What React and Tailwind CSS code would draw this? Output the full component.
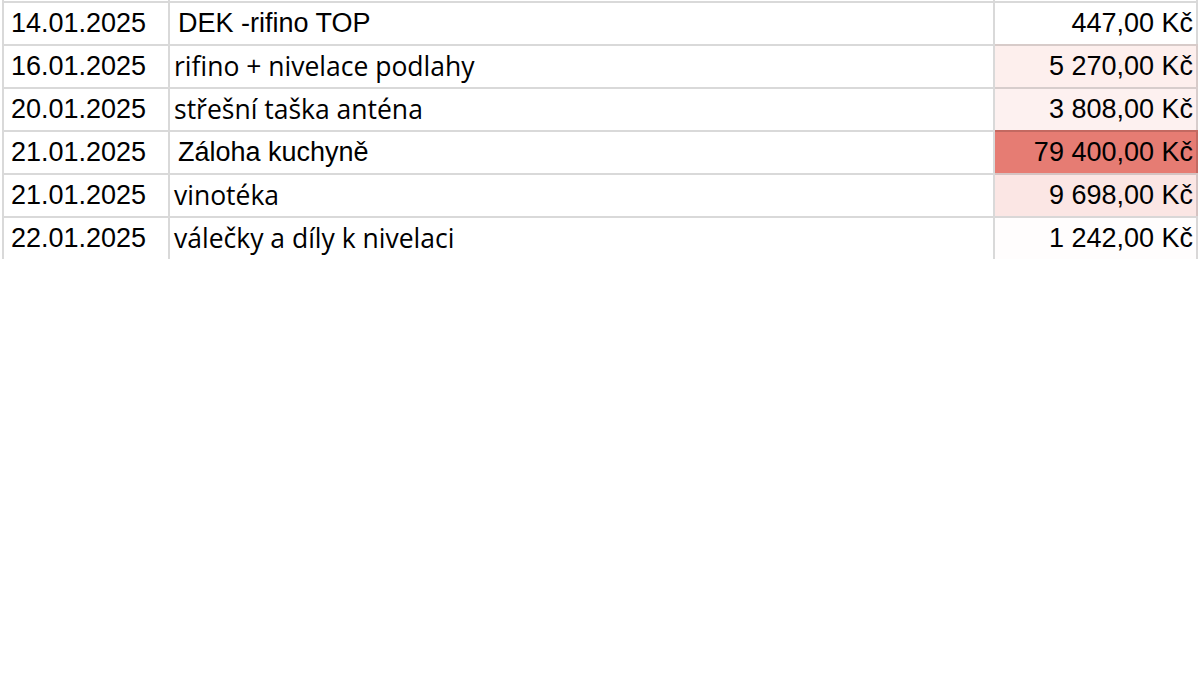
import React from "react";

const rows = [
  { date: "14.01.2025", desc: "DEK -rifino TOP", arial: true, amount: "447,00 Kč", bg: "bg-white" },
  { date: "16.01.2025", desc: "rifino + nivelace podlahy", arial: false, amount: "5 270,00 Kč", bg: "bg-[#fdefed]" },
  { date: "20.01.2025", desc: "střešní taška anténa", arial: false, amount: "3 808,00 Kč", bg: "bg-[#fdf1f0]" },
  { date: "21.01.2025", desc: "Záloha kuchyně", arial: true, amount: "79 400,00 Kč", bg: "bg-[#e67c73]" },
  { date: "21.01.2025", desc: "vinotéka", arial: false, amount: "9 698,00 Kč", bg: "bg-[#fbe6e4]" },
  { date: "22.01.2025", desc: "válečky a díly k nivelaci", arial: false, amount: "1 242,00 Kč", bg: "bg-[#fffdfd]" },
];

export default function App() {
  return (
    <div className="w-[1200px] h-[674px] bg-white overflow-hidden">
      <div className="ml-[2px] w-[1196px] border-l-2 border-[#d9d9d9]">
        <div className="grid grid-cols-[166px_825px_203px] h-[1px]">
          <div className="border-r-2 border-[#d9d9d9]" />
          <div className="border-r-2 border-[#d9d9d9]" />
          <div className="border-r-2 border-[#d9d9d9]" />
        </div>
        {rows.map((r, i) => (
          <div key={i} className="grid grid-cols-[166px_825px_203px] h-[43px] text-black">
            <div className="flex items-center border-t-2 border-r-2 border-[rgba(0,0,0,0.15)] pl-[7px] text-[27px] font-['Liberation_Sans',Arial,sans-serif] whitespace-nowrap">
              {r.date}
            </div>
            <div
              className={
                r.arial
                  ? "flex items-center border-t-2 border-r-2 border-[rgba(0,0,0,0.15)] pl-[8px] text-[27px] font-['Liberation_Sans',Arial,sans-serif] whitespace-nowrap"
                  : "flex items-center border-t-2 border-r-2 border-[rgba(0,0,0,0.15)] pl-[4px] text-[26.5px] font-['Open_Sans','Noto_Sans',sans-serif] whitespace-nowrap"
              }
            >
              {r.desc}
            </div>
            <div
              className={`flex items-center justify-end border-t-2 border-r-2 border-[rgba(0,0,0,0.15)] pr-[3px] text-[27px] font-['Liberation_Sans',Arial,sans-serif] whitespace-nowrap ${r.bg}`}
            >
              {r.amount}
            </div>
          </div>
        ))}
      </div>
    </div>
  );
}
